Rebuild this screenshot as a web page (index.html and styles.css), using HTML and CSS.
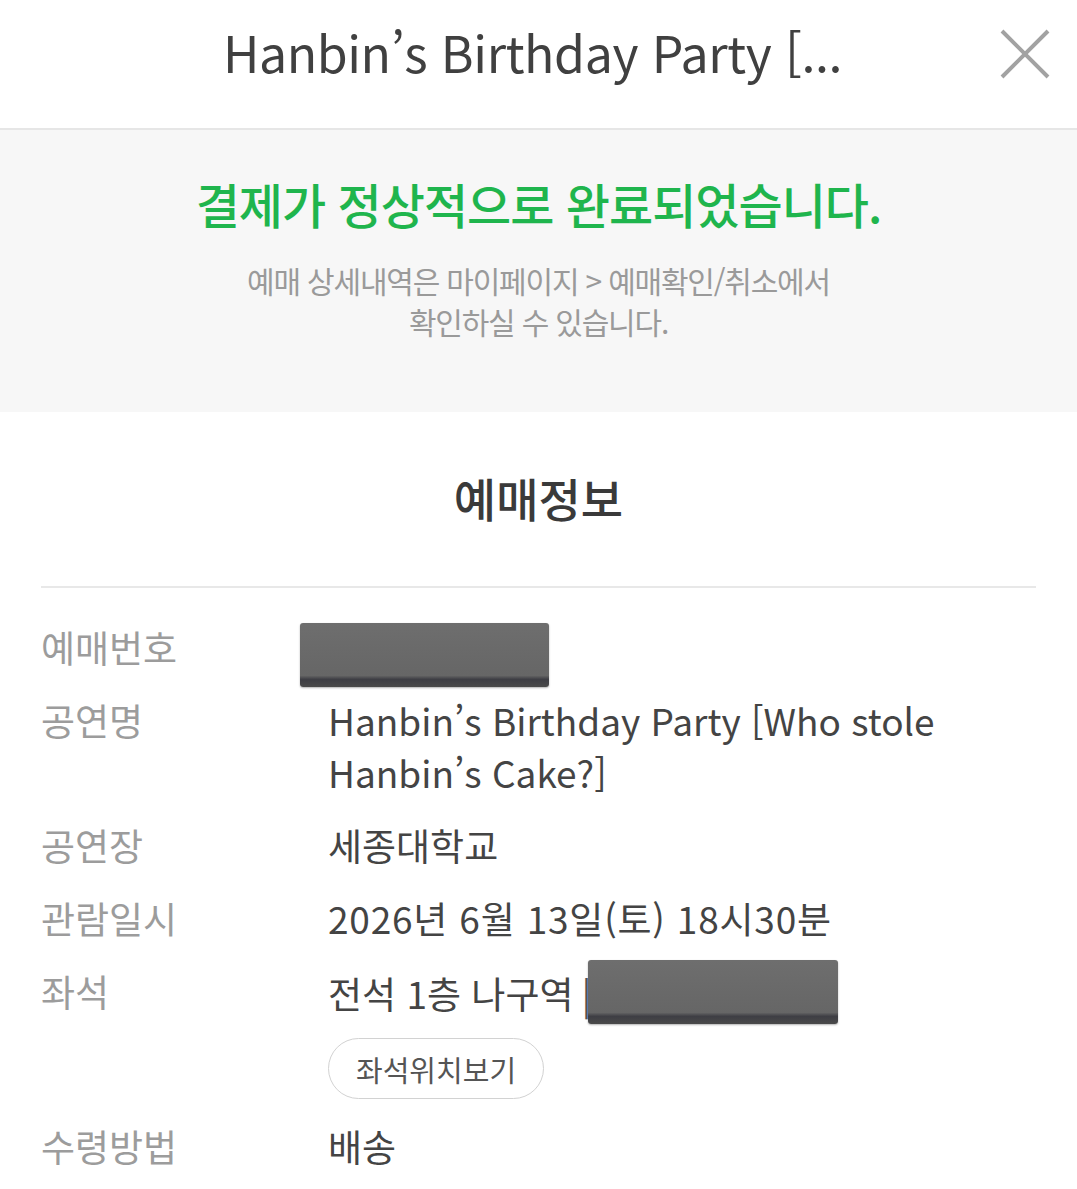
FILE: index.html
```html
<!DOCTYPE html>
<html lang="ko">
<head>
<meta charset="utf-8">
<link rel="stylesheet" href="styles.css">
</head>
<body>
<header class="topbar">
  <h1 class="title">Hanbin’s Birthday Party [...</h1>
  <button class="close" aria-label="닫기">
    <svg width="52" height="52" viewBox="0 0 52 52"><path d="M3 3 L49 49 M49 3 L3 49" stroke="#a2a2a2" stroke-width="4" fill="none"/></svg>
  </button>
</header>
<section class="done">
  <p class="done-title">결제가 정상적으로 완료되었습니다.</p>
  <p class="done-sub">예매 상세내역은 마이페이지 &gt; 예매확인/취소에서<br>확인하실 수 있습니다.</p>
</section>
<section class="info">
  <h2 class="info-title">예매정보</h2>
  <dl class="rows">
    <div class="row"><dt>예매번호</dt><dd><span class="redact redact-num"></span></dd></div>
    <div class="row"><dt>공연명</dt><dd>Hanbin’s Birthday Party [Who stole Hanbin’s Cake?]</dd></div>
    <div class="row"><dt>공연장</dt><dd>세종대학교</dd></div>
    <div class="row"><dt>관람일시</dt><dd class="date">2026년 6월 13일(토) 18시30분</dd></div>
    <div class="row"><dt>좌석</dt><dd><span class="seat">전석 1층 나구역<span class="bar">|</span><span class="redact redact-seat"></span></span><button class="pill">좌석위치보기</button></dd></div>
    <div class="row"><dt>수령방법</dt><dd>배송</dd></div>
  </dl>
</section>
</body>
</html>
```
FILE: styles.css
```css
* { box-sizing: border-box; }
html, body { margin: 0; padding: 0; background: #fff; }
body { font-family: "Noto Sans CJK KR", "Noto Sans", sans-serif; color: #444; width: 1077px; overflow: hidden; }
.topbar { height: 130px; border-bottom: 2px solid #e6e6e6; display: flex; align-items: center; justify-content: center; position: relative; }
.title { margin: 0; font-weight: 400; font-size: 50px; letter-spacing: -0.4px; color: #404040; padding-bottom: 26px; padding-right: 12px; }
.close { position: absolute; right: 26px; top: 28px; background: none; border: 0; padding: 0; width: 52px; height: 52px; }
.close svg { display: block; }
.done { background: #f7f7f7; height: 282px; text-align: center; display: flex; flex-direction: column; align-items: center; }
.done-title { margin: 43px 0 0; font-size: 48px; font-weight: 500; color: #1fb54d; letter-spacing: -1px; line-height: 60px; }
.done-sub { margin: 27px 0 0; font-size: 30px; color: #9a9a9a; letter-spacing: -1.2px; line-height: 41px; }
.info { padding: 0 41px; }
.info-title { margin: 0; text-align: center; font-size: 46px; font-weight: 500; color: #3a3a3a; line-height: 60px; padding-top: 55px; padding-bottom: 59px; border-bottom: 2px solid #e8e8e8; }
.rows { margin: 0; padding-top: 33px; }
.row { display: flex; margin-bottom: 21px; }
.row dt { width: 287px; flex: none; font-size: 37px; color: #9c9c9c; line-height: 52px; }
.row dd { margin: 0; font-size: 37px; line-height: 52px; color: #444; }
.row dd.date { letter-spacing: 0.8px; }
.redact { background: linear-gradient(#6e6e6e, #666 82%, #3e3e44 88%, #4a4a4a); border-radius: 3px; box-shadow: 0 1px 2px rgba(0,0,0,.3); }
.redact-num { display: block; width: 249px; height: 64px; margin: 2px 0 -14px -28px; }
.seat { display: flex; align-items: flex-start; white-space: pre; margin-top: 2px; margin-bottom: -2px; }
.bar { color: #555; margin-left: 8px; }
.redact-seat { display: block; width: 250px; height: 64px; margin: -7px 0 -5px -4px; }
.pill { display: block; margin-top: 21px; height: 61px; padding: 0 27px; border: 1.5px solid #d2d2d2; border-radius: 31px; background: #fff; font-family: inherit; font-size: 29px; color: #555; }
```
